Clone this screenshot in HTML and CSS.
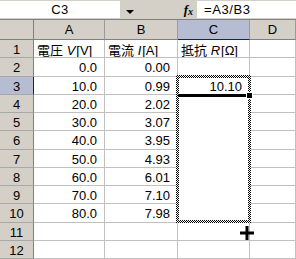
FILE: index.html
```html
<!DOCTYPE html>
<html lang="ja">
<head>
  <meta charset="UTF-8" />
  <title>Sheet1</title>
  <link rel="stylesheet" href="styles.css">
</head>
<body>
  <div class="formula-bar">
    <div class="name-box">C3</div>
    <div class="name-drop"><span class="arrow"></span></div>
    <div class="fx"><i>f</i><i class="fx-x">x</i></div>
    <div class="formula">=A3/B3</div>
  </div>

  <div class="sheet">
    <div class="hd corner"></div>
    <div class="hd col">A</div>
    <div class="hd col">B</div>
    <div class="hd col sel-col">C</div>
    <div class="hd col">D</div>

    <div class="hd row">1</div>
    <div class="cell txt"><span>電圧 <i>V</i>[V]</span></div>
    <div class="cell txt"><span>電流 <i>I</i>[A]</span></div>
    <div class="cell txt"><span>抵抗 <i>R</i>[Ω]</span></div>
    <div class="cell"></div>

    <div class="hd row">2</div>
    <div class="cell">0.0</div>
    <div class="cell">0.00</div>
    <div class="cell"></div>
    <div class="cell"></div>

    <div class="hd row sel-row">3</div>
    <div class="cell">10.0</div>
    <div class="cell">0.99</div>
    <div class="cell clear">10.10</div>
    <div class="cell"></div>

    <div class="hd row">4</div>
    <div class="cell">20.0</div>
    <div class="cell">2.02</div>
    <div class="cell clear"></div>
    <div class="cell"></div>

    <div class="hd row">5</div>
    <div class="cell">30.0</div>
    <div class="cell">3.07</div>
    <div class="cell clear"></div>
    <div class="cell"></div>

    <div class="hd row">6</div>
    <div class="cell">40.0</div>
    <div class="cell">3.95</div>
    <div class="cell clear"></div>
    <div class="cell"></div>

    <div class="hd row">7</div>
    <div class="cell">50.0</div>
    <div class="cell">4.93</div>
    <div class="cell clear"></div>
    <div class="cell"></div>

    <div class="hd row">8</div>
    <div class="cell">60.0</div>
    <div class="cell">6.01</div>
    <div class="cell clear"></div>
    <div class="cell"></div>

    <div class="hd row">9</div>
    <div class="cell">70.0</div>
    <div class="cell">7.10</div>
    <div class="cell clear"></div>
    <div class="cell"></div>

    <div class="hd row">10</div>
    <div class="cell">80.0</div>
    <div class="cell">7.98</div>
    <div class="cell clear"></div>
    <div class="cell"></div>

    <div class="hd row">11</div>
    <div class="cell"></div>
    <div class="cell"></div>
    <div class="cell"></div>
    <div class="cell"></div>

    <div class="hd row">12</div>
    <div class="cell"></div>
    <div class="cell"></div>
    <div class="cell"></div>
    <div class="cell"></div>

    <!-- copy marquee, active cell edge, fill handle and cursor -->
    <div class="marquee"></div>
    <div class="active-edge"></div>
    <div class="fill-handle"></div>
    <svg class="cursor" width="14" height="14" viewBox="0 0 14 14">
      <path d="M5.5 0h3v5.5h5.5v3h-5.5v5.5h-3v-5.5h-5.5v-3h5.5z" fill="#000"/>
    </svg>
  </div>
</body>
</html>
```

FILE: styles.css
```css
html, body {
  margin: 0;
  padding: 0;
  background: #ffffff;
  overflow: hidden;
}
body {
  width: 296px;
  height: 259px;
  font-family: "Liberation Sans", "Noto Sans CJK JP", sans-serif;
  font-size: 13px;
  color: #000;
}
.formula-bar {
  display: flex;
  align-items: stretch;
  height: 20px;
  box-sizing: border-box;
  background: #d4d0c8;
  padding-top: 1px;
  border-bottom: 1px solid #808080;
}
.name-box {
  width: 120px;
  background: #ffffff;
  display: flex;
  align-items: center;
  justify-content: center;
  margin-bottom: 1px;
  letter-spacing: 0.5px;
}
.name-drop {
  width: 20px;
  display: flex;
  align-items: center;
  justify-content: center;
  padding-top: 3px;
}
.arrow {
  width: 0;
  height: 0;
  border-left: 4px solid transparent;
  border-right: 4px solid transparent;
  border-top: 4px solid #000;
}
.fx {
  width: 57px;
  display: flex;
  align-items: center;
  justify-content: flex-end;
  padding-right: 4px;
  box-sizing: border-box;
  font-family: "Liberation Serif", serif;
  font-weight: bold;
  font-size: 13px;
}
.fx-x {
  font-size: 10px;
  margin-top: 3px;
}
.formula {
  flex: 1;
  background: #ffffff;
  display: flex;
  align-items: center;
  padding-left: 7px;
  margin-bottom: 1px;
  letter-spacing: 0.6px;
}

.sheet {
  position: relative;
  display: grid;
  grid-template-columns: 34px 71px 73px 72px 1fr;
  grid-template-rows: 20px 18px 19px 18px 18px 18px 19px 18px 18px 18px 19px 18px 18px;
}
.hd {
  background: #d4d0c8;
  box-sizing: border-box;
  display: flex;
  align-items: center;
  justify-content: center;
}
.col {
  border-right: 1px solid #9a9a9a;
  border-bottom: 1px solid #808080;
}
.corner {
  border-right: 1px solid #808080;
  border-bottom: 1px solid #808080;
}
.row {
  border-right: 1px solid #808080;
  border-bottom: 1px solid #a8a8a8;
  padding-top: 1px;
}
.sel-col {
  background: #b6bdd2;
  border-bottom-color: #0a246a;
}
.sel-row {
  background: #b6bdd2;
  border-right-color: #0a246a;
}
.cell {
  box-sizing: border-box;
  border-right: 1px solid #c0c0c0;
  border-bottom: 1px solid #c0c0c0;
  display: flex;
  align-items: center;
  justify-content: flex-end;
  padding: 1px 7px 0 0;
  white-space: nowrap;
  overflow: hidden;
}
.txt {
  justify-content: flex-start;
  padding: 1px 0 0 3px;
}
.txt i {
  padding-right: 1px;
}
.clear {
  border-bottom-color: #ffffff;
}

.marquee {
  position: absolute;
  left: 176px;
  top: 55px;
  width: 75px;
  height: 148px;
  box-sizing: border-box;
  padding: 3px;
  background: repeating-conic-gradient(#000 0 25%, #fff 0 50%) 0 0 / 2px 2px;
  -webkit-mask: linear-gradient(#000 0 0) content-box, linear-gradient(#000 0 0);
  -webkit-mask-composite: xor;
  mask-composite: exclude;
}
.active-edge {
  position: absolute;
  left: 178px;
  top: 74px;
  width: 69px;
  height: 3px;
  background: #000;
}
.fill-handle {
  position: absolute;
  left: 246px;
  top: 72px;
  width: 5px;
  height: 5px;
  background: #000;
  border: 1px solid #fff;
}
.cursor {
  position: absolute;
  left: 240px;
  top: 206px;
}
```
